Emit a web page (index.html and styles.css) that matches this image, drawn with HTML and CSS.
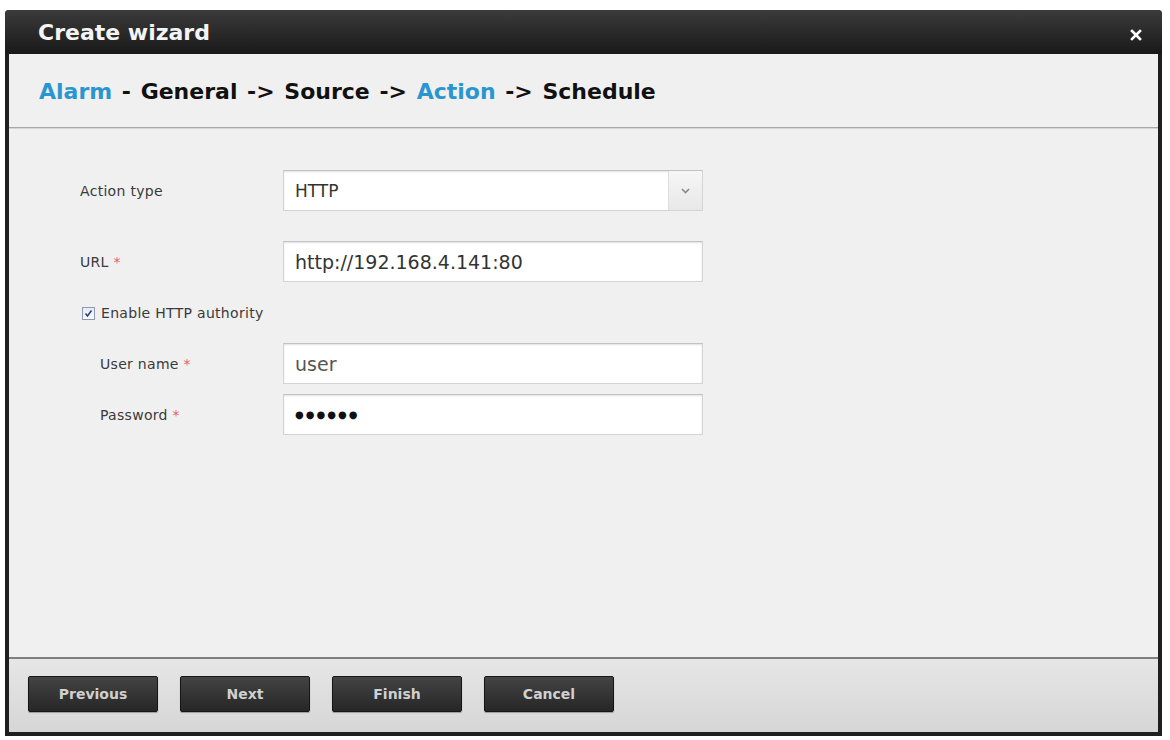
FILE: index.html
```html
<!DOCTYPE html>
<html lang="en">
<head>
  <meta charset="UTF-8" />
  <meta name="viewport" content="width=device-width, initial-scale=1.0" />
  <title>Create wizard</title>
  <link rel="stylesheet" href="styles.css">
</head>
<body>

  <!-- === WIZARD DIALOG === -->
  <div class="dialog">
    <div class="dialog-title">
      <span>Create wizard</span>
      <button class="close-btn" aria-label="Close">
        <svg width="12" height="12" viewBox="0 0 12 12">
          <path d="M2 2 L10 10 M10 2 L2 10" stroke="#fff" stroke-width="2.6" stroke-linecap="square" />
        </svg>
      </button>
    </div>

    <div class="steps">
      <p><span class="step-active">Alarm</span> - General -&gt; Source -&gt; <span class="step-active">Action</span> -&gt; Schedule</p>
    </div>

    <div class="dialog-body">
      <div class="form-row">
        <label class="form-label">Action type</label>
        <div class="select-box">
          <span class="select-value">HTTP</span>
          <span class="select-arrow">
            <svg width="9" height="6" viewBox="0 0 9 6">
              <path d="M1 1 L4.5 4.5 L8 1" fill="none" stroke="#888" stroke-width="1.6" />
            </svg>
          </span>
        </div>
      </div>

      <div class="form-row">
        <label class="form-label">URL <span class="req">*</span></label>
        <div class="text-box">http://192.168.4.141:80</div>
      </div>

      <div class="check-row">
        <span class="checkbox">
          <svg width="9" height="9" viewBox="0 0 9 9">
            <path d="M1.5 4.5 L3.5 7 L7.5 1.5" fill="none" stroke="#2b3f78" stroke-width="1.5" />
          </svg>
        </span>
        <span>Enable HTTP authority</span>
      </div>

      <div class="form-row sub-row">
        <label class="form-label">User name <span class="req">*</span></label>
        <div class="text-box text-muted">user</div>
      </div>

      <div class="form-row sub-row">
        <label class="form-label">Password <span class="req">*</span></label>
        <div class="text-box password">&#9679;&#9679;&#9679;&#9679;&#9679;&#9679;</div>
      </div>
    </div>

    <div class="dialog-footer">
      <button class="footer-btn">Previous</button>
      <button class="footer-btn">Next</button>
      <button class="footer-btn">Finish</button>
      <button class="footer-btn">Cancel</button>
    </div>
  </div>

</body>
</html>
```

FILE: styles.css
```css
* {
  margin: 0;
  padding: 0;
  box-sizing: border-box;
}

body {
  font-family: "DejaVu Sans", Verdana, sans-serif;
  background: #ffffff;
  color: #333;
}

button {
  cursor: pointer;
  font-family: inherit;
}

/* === DIALOG FRAME === */
.dialog {
  width: 1157px;
  height: 726px;
  margin: 10px 0 0 5px;
  display: flex;
  flex-direction: column;
  border: 4px solid #1f1f1f;
  border-top: none;
  border-radius: 4px 4px 0 0;
  background: #f0f0f0;
}

.dialog-title {
  height: 44px;
  display: flex;
  align-items: center;
  justify-content: space-between;
  margin: 0 -4px;
  padding: 0 20px 0 33px;
  background: linear-gradient(#3b3b3b, #191919);
  color: #f4f4f4;
  font-size: 22px;
  font-weight: bold;
  border-radius: 4px 4px 0 0;
}

.dialog-title span {
  margin-top: 1px;
}

.close-btn {
  background: none;
  border: none;
  display: flex;
  margin-top: 5px;
}

/* === STEPS === */
.steps {
  height: 74px;
  display: flex;
  align-items: center;
  padding: 2px 0 0 30px;
  font-size: 22px;
  font-weight: bold;
  color: #111;
  border-bottom: 1px solid #a8a8a8;
  box-shadow: 0 1px 0 #d6d6d6;
}

.steps p {
  word-spacing: 2px;
}

.step-active {
  color: #2a96d0;
}

/* === FORM === */
.dialog-body {
  flex: 1;
  padding: 42px 0 0 71px;
  font-size: 14px;
  letter-spacing: 0.3px;
  color: #3a3a3a;
}

.form-row {
  display: flex;
  align-items: center;
  margin-bottom: 30px;
}

.form-label {
  width: 203px;
}

.req {
  color: #e0606a;
}

.select-box,
.text-box {
  width: 420px;
  height: 41px;
  background: #fff;
  border: 1px solid #d4d4d4;
  border-top-color: #c2c2c2;
  box-shadow: inset 0 1px 2px rgba(0, 0, 0, 0.12);
  display: flex;
  align-items: center;
  font-size: 19px;
  letter-spacing: 0;
  color: #333;
}

.text-box {
  padding-left: 11px;
}

.text-muted {
  color: #555;
}

.password {
  font-size: 10px;
  letter-spacing: 2px;
  color: #111;
}

.select-value {
  flex: 1;
  padding-left: 11px;
  font-size: 17px;
}

.select-arrow {
  width: 34px;
  height: 100%;
  display: flex;
  align-items: center;
  justify-content: center;
  border-left: 1px solid #dedede;
  background: linear-gradient(#f6f6f6, #e8e8e8);
}

.check-row {
  display: flex;
  align-items: center;
  gap: 6px;
  margin: -9px 0 20px 2px;
  height: 20px;
}

.checkbox {
  width: 13px;
  height: 13px;
  border: 1px solid #8e9ab4;
  background: linear-gradient(#e6eaf2, #fbfcfe);
  display: flex;
  align-items: center;
  justify-content: center;
}

.sub-row {
  margin-bottom: 10px;
}

.sub-row .form-label {
  padding-left: 20px;
}

/* === FOOTER === */
.dialog-footer {
  height: 75px;
  display: flex;
  align-items: flex-start;
  gap: 22px;
  padding: 17px 0 0 19px;
  border-top: 2px solid #7f7f7f;
  background: linear-gradient(#e6e6e6, #d6d6d6);
}

.footer-btn {
  width: 130px;
  height: 36px;
  border: 1px solid #151515;
  border-radius: 2px;
  background: linear-gradient(#444, #262626);
  color: #d0d0d0;
  font-size: 14px;
  font-weight: bold;
  box-shadow: 0 1px 1px rgba(0, 0, 0, 0.3);
}
```
